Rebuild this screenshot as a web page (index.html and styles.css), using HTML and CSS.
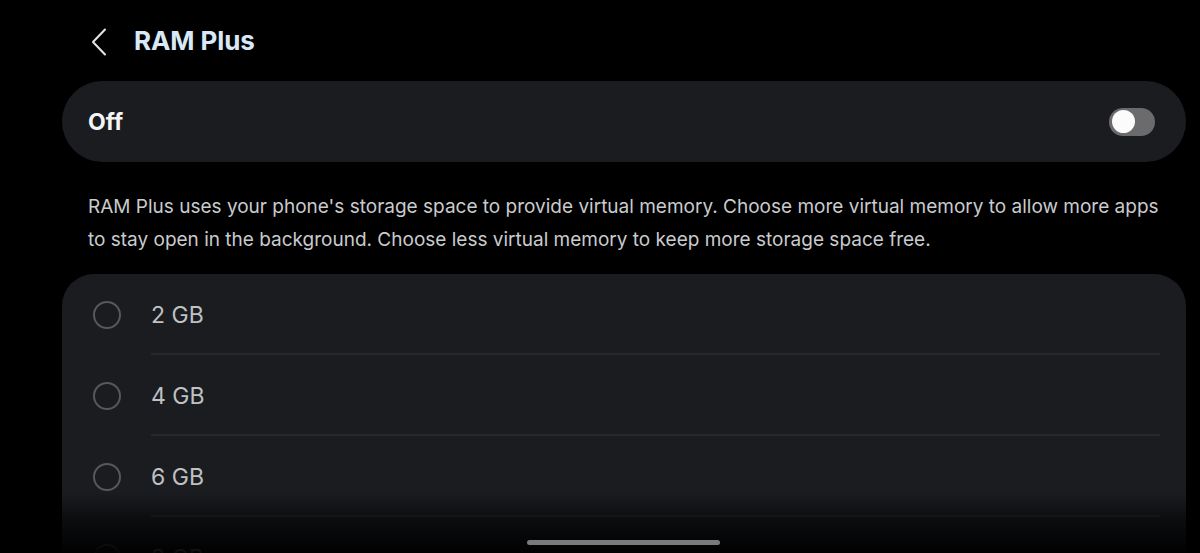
FILE: index.html
```html
<!DOCTYPE html>
<html lang="en">
<head>
<meta charset="utf-8">
<title>RAM Plus</title>
<link rel="stylesheet" href="styles.css">
</head>
<body>
<div class="screen">
  <header class="topbar">
    <svg class="back" width="18" height="28" viewBox="0 0 18 28"><path d="M15 1.5 L3 14 L15 26.5" fill="none" stroke="#e6e6e6" stroke-width="2" stroke-linecap="round" stroke-linejoin="round"/></svg>
    <h1 class="title">RAM Plus</h1>
  </header>
  <div class="switch-card">
    <span class="switch-label">Off</span>
    <span class="toggle"><span class="knob"></span></span>
  </div>
  <p class="desc">RAM Plus uses your phone's storage space to provide virtual memory. Choose more virtual memory to allow more apps to stay open in the background. Choose less virtual memory to keep more storage space free.</p>
  <div class="list-card">
    <div class="row"><span class="radio"></span><span class="row-label">2 GB</span></div>
    <div class="row"><span class="radio"></span><span class="row-label">4 GB</span></div>
    <div class="row"><span class="radio"></span><span class="row-label">6 GB</span></div>
    <div class="row"><span class="radio"></span><span class="row-label">8 GB</span></div>
  </div>
</div>
<div class="fade"></div>
<div class="home-bar"></div>
</body>
</html>
```
FILE: styles.css
```css
html, body {
  margin: 0;
  padding: 0;
  background: #000;
  height: 553px;
  overflow: hidden;
}
body {
  font-family: Inter, "Noto Sans", sans-serif;
}
.screen {
  padding: 0 14px 0 62px;
  display: flex;
  flex-direction: column;
}
.topbar {
  height: 81px;
  display: flex;
  align-items: center;
  padding-left: 28px;
  gap: 26px;
  box-sizing: border-box;
}
.back {
  display: block;
  margin-top: 2px;
}
.title {
  margin: 0;
  font-size: 26px;
  font-weight: 700;
  color: #d9e8f7;
  letter-spacing: -0.1px;
}
.switch-card {
  height: 81px;
  border-radius: 41px;
  background: #1a1c20;
  display: flex;
  align-items: center;
  justify-content: space-between;
  padding: 0 31px 0 26px;
}
.switch-label {
  font-size: 23px;
  font-weight: 700;
  color: #f4f4f4;
}
.toggle {
  width: 46px;
  height: 28px;
  border-radius: 14px;
  background: #6b6b6d;
  display: flex;
  align-items: center;
  padding-left: 3px;
  box-sizing: border-box;
}
.knob {
  width: 23px;
  height: 23px;
  border-radius: 50%;
  background: #fbfbfb;
}
.desc {
  margin: 28px 16px 0 26px;
  font-size: 19px;
  line-height: 33px;
  color: #c9cbce;
}
.list-card {
  margin-top: 18px;
  background: #1a1c20;
  border-radius: 32px 32px 0 0;
  padding: 0 26px 0 31px;
}
.row {
  height: 81px;
  display: flex;
  align-items: center;
  gap: 30px;
  position: relative;
  box-sizing: border-box;
}
.row::after {
  content: "";
  position: absolute;
  left: 58px;
  right: 0;
  bottom: 0;
  height: 2px;
  background: #25282c;
}
.radio {
  width: 24px;
  height: 24px;
  border-radius: 50%;
  border: 2px solid #56585b;
  flex: none;
}
.row-label {
  font-size: 23px;
  color: #bfc1c4;
}
.fade {
  position: fixed;
  left: 0;
  right: 0;
  bottom: 0;
  height: 60px;
  background: linear-gradient(to bottom, rgba(0,0,0,0) 0%, rgba(0,0,0,0.55) 45%, rgba(0,0,0,0.95) 100%);
}
.home-bar {
  position: fixed;
  left: 527px;
  width: 193px;
  bottom: 8px;
  height: 5px;
  border-radius: 3px;
  background: #7a7a7a;
}
```
